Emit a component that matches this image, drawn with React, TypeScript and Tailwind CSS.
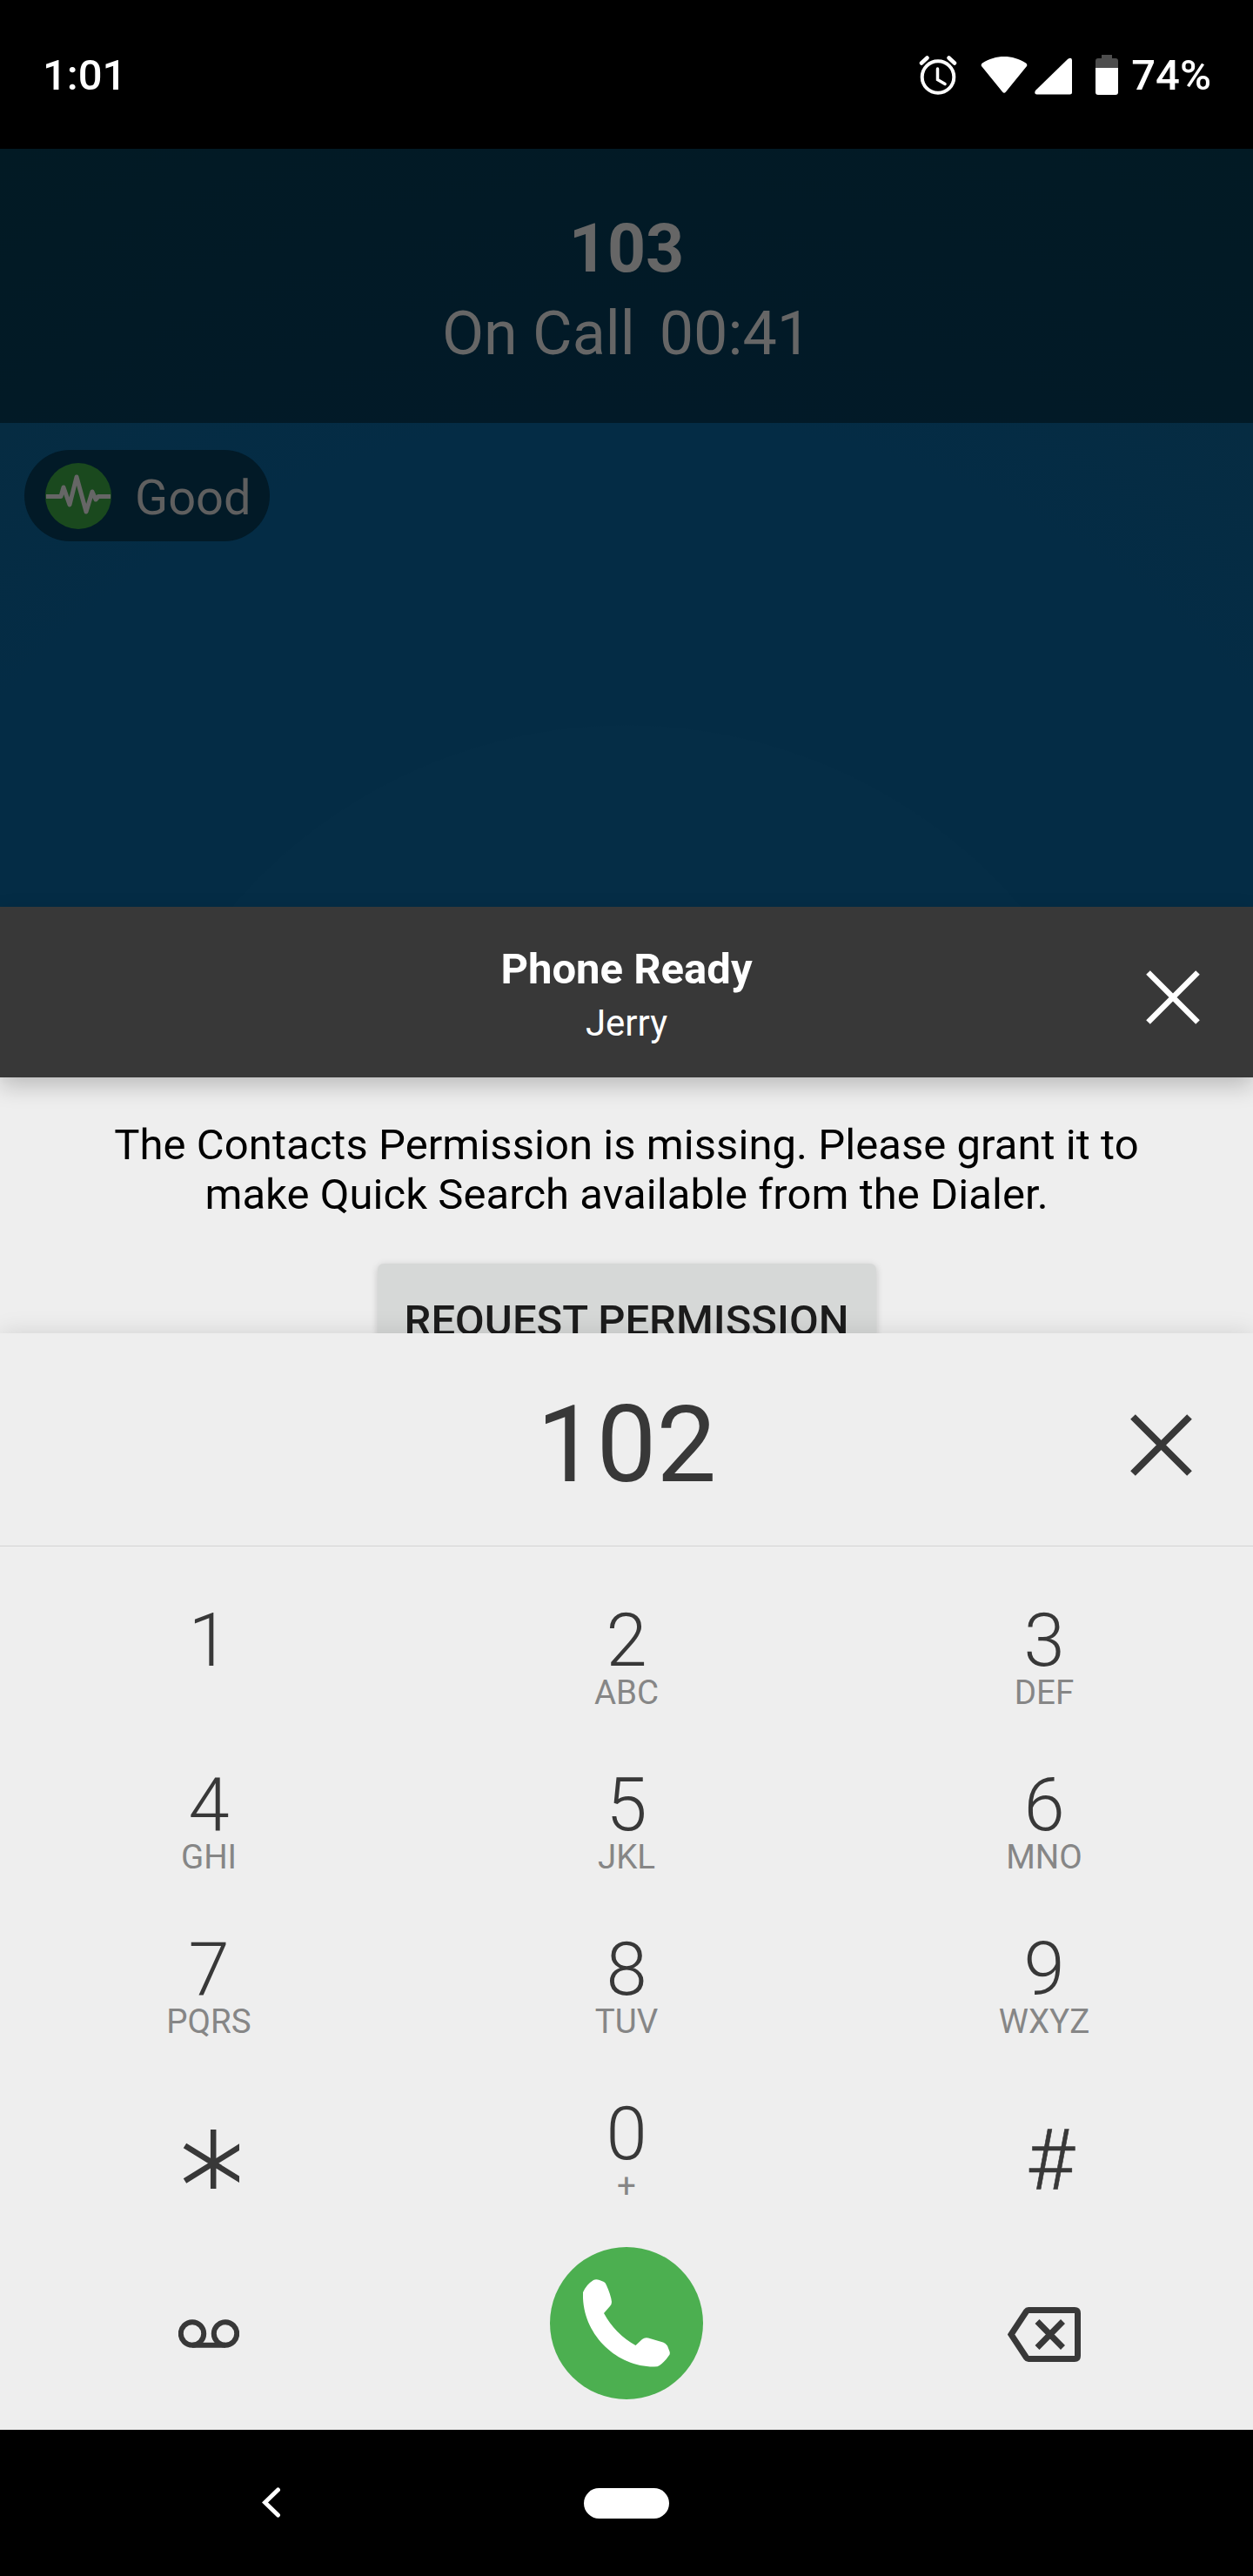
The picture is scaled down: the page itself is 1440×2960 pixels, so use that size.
import React from "react";

const KEYS = [
  ["1", ""], ["2", "ABC"], ["3", "DEF"],
  ["4", "GHI"], ["5", "JKL"], ["6", "MNO"],
  ["7", "PQRS"], ["8", "TUV"], ["9", "WXYZ"],
];

function Key({ digit, letters }: { digit: string; letters: string }) {
  return (
    <button className="flex h-[189px] flex-col items-center pt-[39px]">
      <span className="text-[85px] leading-[76px] font-light text-[#383838]">{digit}</span>
      <span className="text-[38.5px] leading-[44px] text-[#868686]">{letters}</span>
    </button>
  );
}

function StatusBar() {
  return (
    <header className="flex h-[171px] shrink-0 items-center bg-black pt-[2px] pr-[48px] pl-[49px] text-white">
      <span className="text-[49px] leading-[56px] font-medium">1:01</span>
      <div className="ml-auto flex h-[60px] items-center">
        <svg className="-mt-[2px] h-[46px] w-[44px]" viewBox="0 0 44 46" fill="none" stroke="white" strokeLinecap="round">
          <circle cx="22" cy="25.500" r="18.300" strokeWidth="4" />
          <path d="M21.500 16v12.500l8.500 5" strokeWidth="3.500" />
          <path d="M3 9.500L9.500 3.500M41 9.500L34.500 3.500" strokeWidth="4.500" />
        </svg>
        <svg className="-mt-[2px] ml-[27px] h-[46px] w-[54px]" viewBox="0 0 54 46" fill="white">
          <path d="M1 13Q0 11 2 9.500C17-.5 37-.5 52 9.500Q54 11 53 13L29 42.500Q27 45 25 42.500Z" />
        </svg>
        <svg className="-mt-[2px] ml-[8px] h-[46px] w-[43px]" viewBox="0 0 43 46" fill="white">
          <path d="M1 41L38 5Q42.500 2 43 6V43Q43 45.500 40.500 45.500H2.500Q-1 45 1 41Z" />
        </svg>
        <svg className="-mt-[2px] ml-[27px] h-[46px] w-[26px]" viewBox="0 0 26 46">
          <path d="M7 0h12v4h4q3 0 3 3v8H0V7q0-3 3-3h4Z" fill="#4d4d4d" />
          <path d="M0 15h26v28q0 3-3 3H3q-3 0-3-3Z" fill="white" />
        </svg>
        <span className="ml-[15px] text-[49px] leading-[56px] font-medium">74%</span>
      </div>
    </header>
  );
}

export default function App() {
  return (
    <div className="flex h-[2960px] w-[1440px] flex-col overflow-hidden bg-[#eeeeee] font-['Roboto',sans-serif]">
      <StatusBar />

      <section className="flex h-[315px] shrink-0 flex-col items-center bg-[#021a27] bg-[radial-gradient(circle_at_720px_1259px,#021a28_950px,#021a24_1450px)] pt-[70px] text-[#666666]">
        <h1 className="text-[77px] leading-[90px] font-bold">103</h1>
        <p className="mt-[11px] flex gap-[28px] text-[70px] leading-[82px]">
          <span>On Call</span>
          <span>00:41</span>
        </p>
      </section>

      <section className="h-[556px] shrink-0 bg-[#042c45] bg-[radial-gradient(circle_at_720px_944px,#052d46_596px,#042c45_597px,#042c45_950px,#062c42_1180px)] px-[28px] pt-[31px]">
        <div className="flex h-[105px] w-[282px] items-center rounded-full bg-[#021a27] pl-[24px]">
          <svg className="size-[76px]" viewBox="0 0 76 76">
            <circle cx="38" cy="38" r="38" fill="#1a491e" />
            <path d="M1 38.500H18L21 28L28 48L36 16L47 56L54 33L58 42L61 38.500H75" fill="none" stroke="#666" strokeWidth="5" strokeLinejoin="round" />
          </svg>
          <span className="ml-[27px] pt-[4px] text-[56px] leading-[66px] text-[#5f5f5f]">Good</span>
        </div>
      </section>

      <section className="relative z-10 flex h-[196px] shrink-0 items-center justify-center bg-[#383838] pt-[5px] text-white shadow-[0_10px_24px_rgba(0,0,0,0.21)]">
        <div className="text-center">
          <h2 className="text-[49px] leading-[58px] font-bold">Phone Ready</h2>
          <p className="mt-[8px] text-[42px] leading-[50px]">Jerry</p>
        </div>
        <svg className="absolute top-[73px] right-[61px] size-[62px]" viewBox="0 0 62 62" stroke="white" strokeWidth="6.500">
          <path d="M2.500 2.500L59.500 59.500M59.500 2.500L2.500 59.500" />
        </svg>
      </section>

      <section className="flex h-[294px] shrink-0 flex-col items-center overflow-hidden pt-[49px]">
        <p className="w-[1200px] text-center text-[49px] leading-[57px] tracking-[0.05px] text-black">
          The Contacts Permission is missing. Please grant it to make Quick Search available from the Dialer.
        </p>
        <button className="mt-[51px] h-[130px] w-[573px] shrink-0 rounded-[7px] bg-[#d6d8d7] text-[49px] leading-[57px] font-medium text-[#1c1c1c] shadow-[0_2px_8px_rgba(0,0,0,0.18)]">
          REQUEST PERMISSION
        </button>
      </section>

      <section className="relative flex h-[245px] shrink-0 items-center justify-center border-b border-[#d3d3d3] bg-[#eeeeee] pt-[12px] shadow-[0_0_26px_rgba(0,0,0,0.12)]">
        <span className="text-[122.5px] leading-[144px] text-[#383838]">102</span>
        <svg className="absolute top-[93px] right-[70px] size-[71px]" viewBox="0 0 71 71" stroke="#383838" strokeWidth="8">
          <path d="M3 3L68 68M68 3L3 68" />
        </svg>
      </section>

      <main className="relative h-[1015px] shrink-0 bg-[#eeeeee] pt-[31px]">
        <div className="grid grid-cols-3">
          {KEYS.map(([digit, letters]) => (
            <Key key={digit} digit={digit} letters={letters} />
          ))}
          <button className="flex h-[189px] items-start pt-[72px] pl-[210px]">
            <svg className="h-[68px] w-[65px]" viewBox="0 0 65 68" stroke="#383838" strokeWidth="6.500">
              <path d="M35.200 0V68M2.500 18.500L70 60.300M2.500 58.900L70 17.100" />
            </svg>
          </button>
          <Key digit="0" letters="+" />
          <button className="flex h-[189px] items-start justify-center pt-[51px] pl-[14px] text-[96px] leading-[112px] font-light text-[#383838] [-webkit-text-stroke:0.6px_#383838]">#</button>
        </div>
        <div className="grid grid-cols-3 place-items-center pt-[18px]">
          <button className="pt-[23px]">
            <svg className="h-[33px] w-[70px]" viewBox="0 0 70 33" fill="none" stroke="#383838" strokeWidth="6">
              <circle cx="16" cy="16.500" r="13.200" />
              <circle cx="54" cy="16.500" r="13.200" />
              <path d="M16 29.700H54" />
            </svg>
          </button>
          <button className="flex h-[175px] w-[176px] items-center justify-center rounded-[50%] bg-[#4caf50]">
            <svg className="size-[101px]" viewBox="0 0 101 101" fill="white">
              <path d="M0 15Q4 6 12 1Q15-.5 19 1L24 3Q26 4 27 7Q32 18 33 26Q33 29 31 31L24 39Q37 63 60.500 76L68 69Q71 66.500 75 67.500L92 72.500Q95 73.500 97 76.500L99.500 83Q100.500 86 98.500 88Q94 95 88 99Q86 100.500 82 100.500C38 101-2 62 0 15Z" />
            </svg>
          </button>
          <button className="pt-[26px]">
            <svg className="h-[63px] w-[84px]" viewBox="0 0 84 63" fill="none" stroke="#383838" strokeWidth="7">
              <path d="M4 31.500L21.500 5Q22.500 3.500 24 3.500H77Q80.500 3.500 80.500 7V56Q80.500 59.500 77 59.500H24Q22.500 59.500 21.500 58Z" />
              <path d="M34 16.500L63.500 46.500M63.500 16.500L34 46.500" />
            </svg>
          </button>
        </div>
      </main>

      <nav className="relative flex h-[168px] shrink-0 items-center justify-center bg-black">
        <svg className="absolute top-[66px] left-[301px] h-[36px] w-[22px]" viewBox="0 0 22 36" fill="none" stroke="white" strokeWidth="5" strokeLinecap="round">
          <path d="M18.500 3L3.500 17.500L18.500 32" />
        </svg>
        <div className="h-[35px] w-[98px] rounded-full bg-white" />
      </nav>
    </div>
  );
}
